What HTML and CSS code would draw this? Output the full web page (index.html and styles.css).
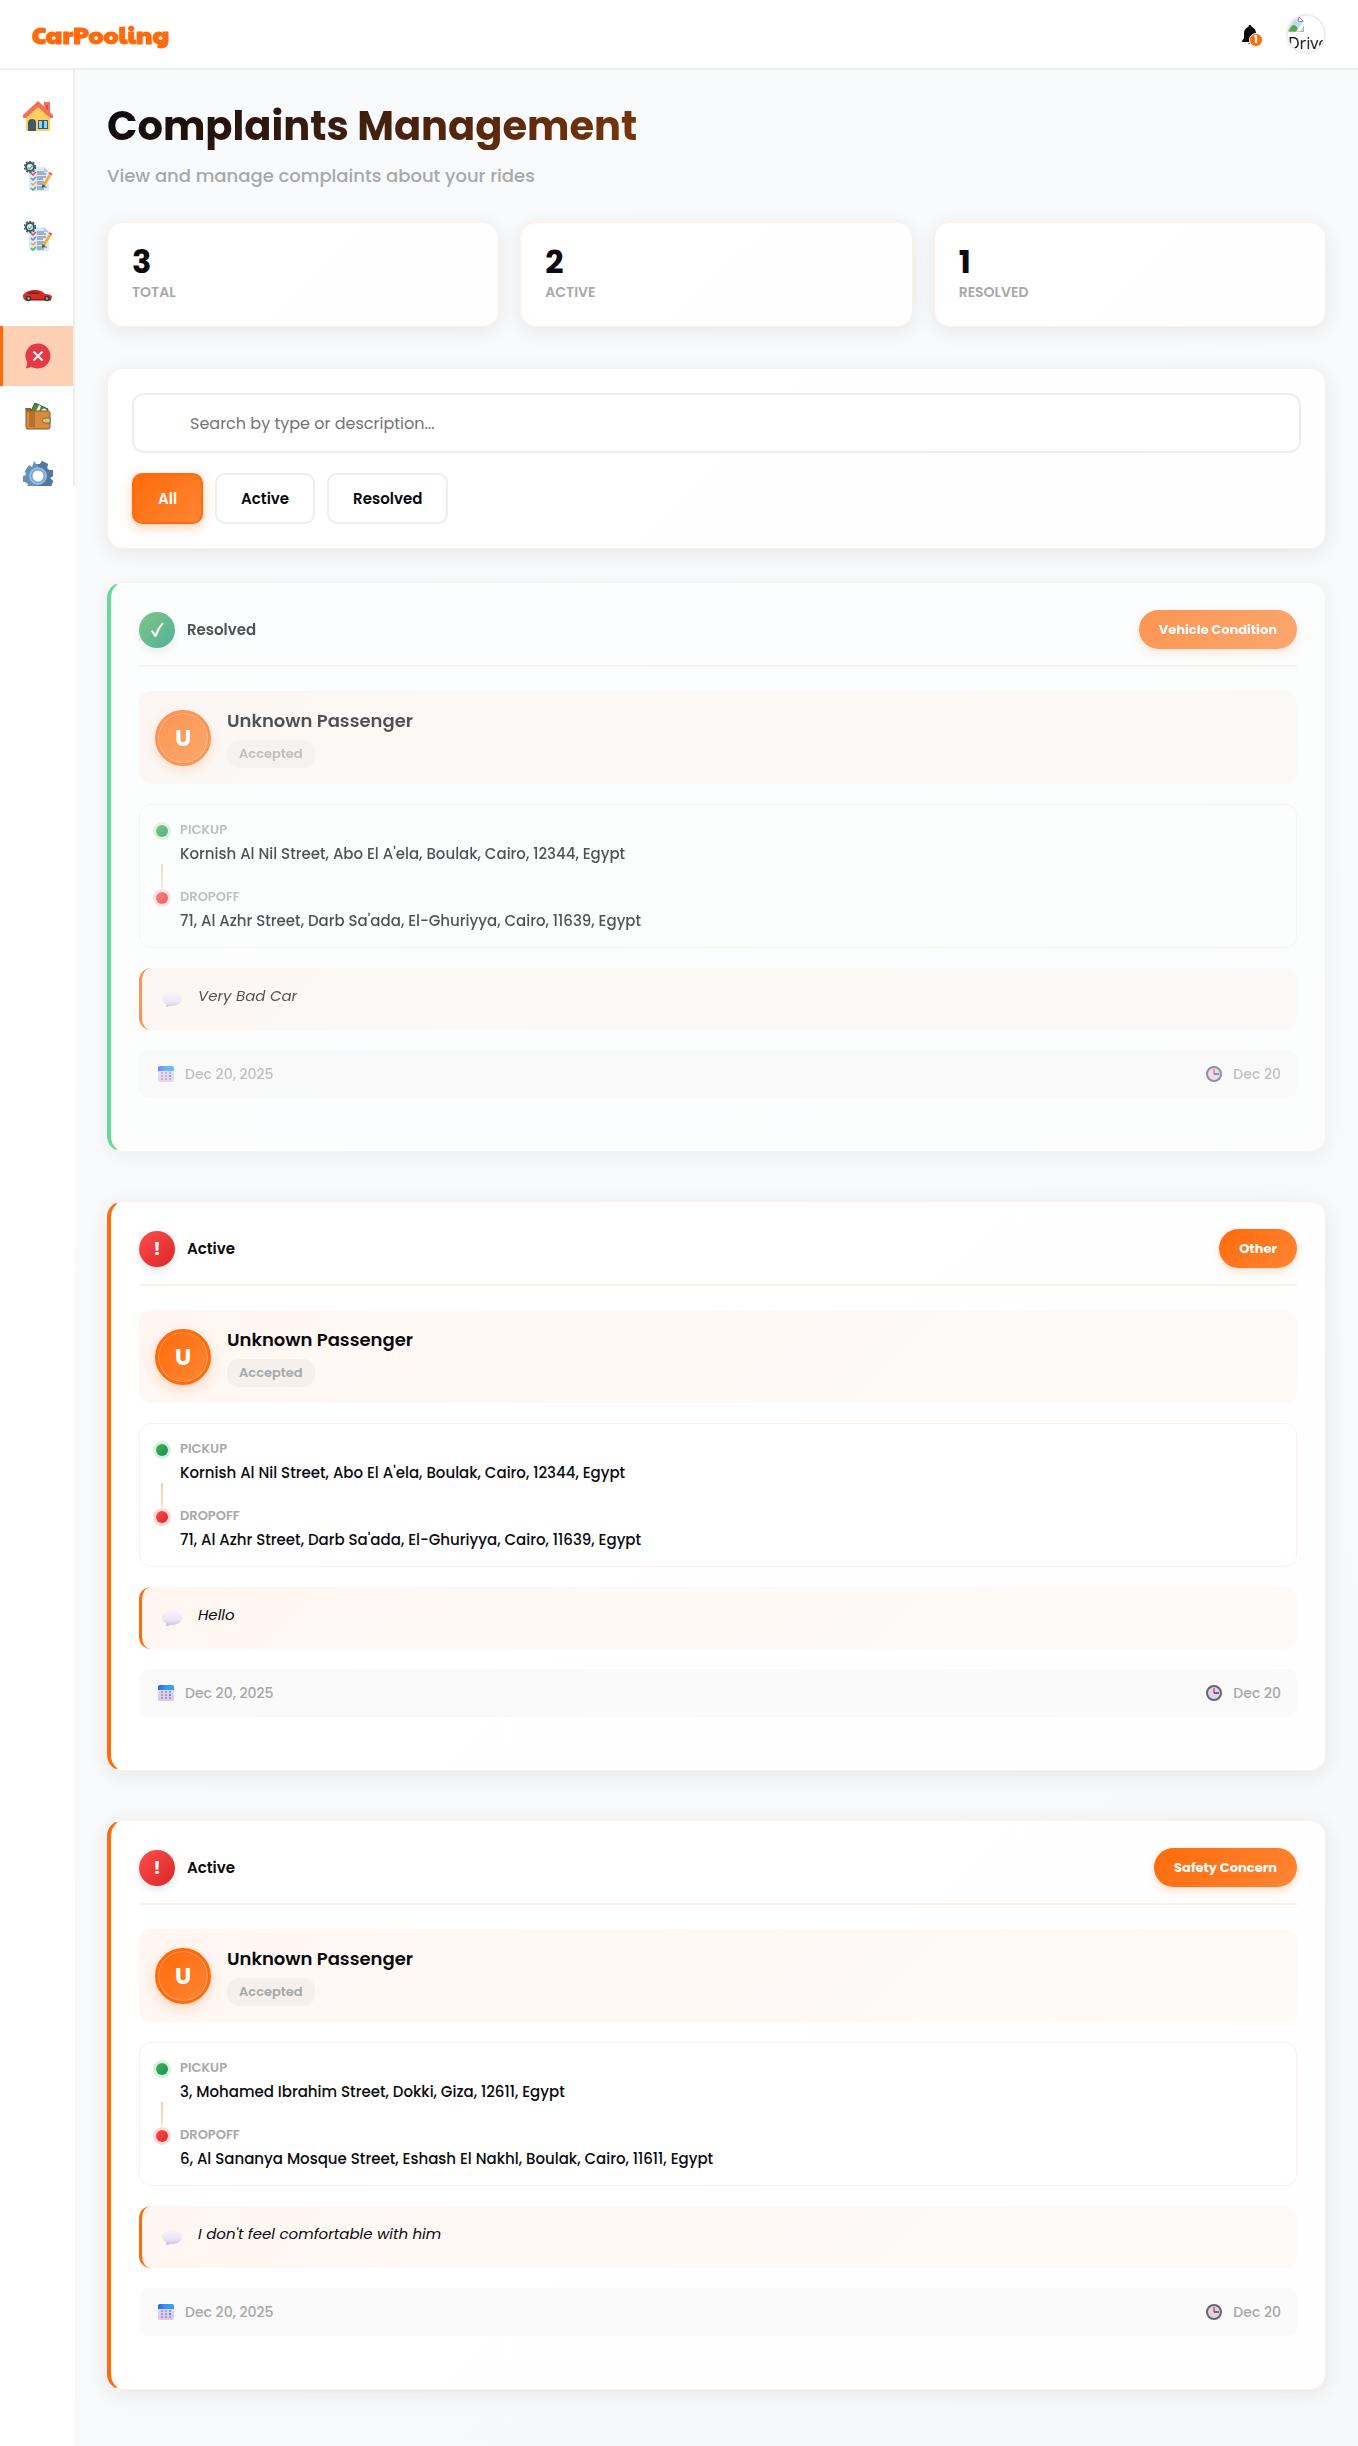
FILE: index.html
```html
<!DOCTYPE html>
<html lang="en">
<head>
<meta charset="utf-8">
<meta name="viewport" content="width=device-width, initial-scale=1">
<title>Complaints Management</title>
<link rel="stylesheet" href="styles.css">
</head>
<body>
<svg class="sprite" aria-hidden="true">
  <defs>
    <linearGradient id="bubbleFill" x1="0" y1="0" x2="0" y2="1"><stop offset="0" stop-color="#f6f2fa"/><stop offset=".6" stop-color="#ece4f2"/><stop offset="1" stop-color="#cbbfe0"/></linearGradient>
    <linearGradient id="calTop" x1="0" y1="0" x2="1" y2="0"><stop offset="0" stop-color="#2b62e8"/><stop offset=".5" stop-color="#2f9bff"/><stop offset="1" stop-color="#35a4ff"/></linearGradient>
    <linearGradient id="calBody" x1="0" y1="0" x2="0" y2="1"><stop offset="0" stop-color="#e3dcee"/><stop offset="1" stop-color="#dcc4ee"/></linearGradient>
  </defs>
  <symbol id="i-home" viewBox="0 0 30 30">
    <path d="M21 1h6v10h-4l-2-2z" fill="#f5705c"/><path d="M23 4h2v6h-2z" fill="#d9503f"/>
    <path d="M3 14 15 3l12 11v16H3z" fill="#ffd05b"/>
    <path d="M15 0 0 14v3h3L15 6l12 11h3v-3z" fill="#f5705c"/>
    <path d="M5 30V22a4 4 0 0 1 8 0v8z" fill="#40596b"/>
    <path d="M15 19h10v9H15z" fill="#40596b"/><path d="M16 20h3v7h-3zM21 20h3v7h-3z" fill="#84dbff"/>
  </symbol>
  <symbol id="i-list" viewBox="0 0 30 30">
    <path d="M6 6h15l5 5v19H6z" fill="#dce9f8"/><path d="M21 6v5h5z" fill="#b3cbe6"/>
    <circle cx="7" cy="6" r="4" fill="#e9f3f4" stroke="#3e5568" stroke-width="2"/>
    <circle cx="7" cy="6" r="5.5" fill="none" stroke="#3e5568" stroke-width="1.4" stroke-dasharray="2 1.5"/>
    <path d="m5 6 1.500 2L9.500 4.500" fill="none" stroke="#4bc07d" stroke-width="1.200"/>
    <path d="M14 11h7M14 13h9M14 16h9M14 18h6M14 21h7M14 23h6M14 26h10M14 28h7" stroke="#64788c" stroke-width="1.200"/>
    <path d="m8 12 2 2 3-3" fill="none" stroke="#f0414f" stroke-width="1.500"/>
    <path d="m8 17 2 2 3-3" fill="none" stroke="#4a8cf0" stroke-width="1.500"/>
    <path d="m8 22 2 2 3-3" fill="none" stroke="#f6a823" stroke-width="1.500"/>
    <path d="m8 27 2 2 3-3" fill="none" stroke="#37b769" stroke-width="1.500"/>
    <path d="m27 14-6 10" stroke="#ffa914" stroke-width="2.500"/><path d="m28.500 14.500-3-2 1-1.500 3 2z" fill="#f0414f"/><path d="m19.500 23-.5 4 3.500-2z" fill="#3e4a57"/>
  </symbol>
  <symbol id="i-car" viewBox="0 0 30 30">
    <path d="M0 14c3-4 8-5 12-5 5 0 7 1 10 4 4 0 7 1 7 3l-1 3H2c-2-1-2-3-2-5z" fill="#dd2a22"/>
    <path d="M4 13c3-3 9-4 14 0z" fill="#7b2b24"/><path d="M2 18h26v1.500H2z" fill="#7d201b"/>
    <circle cx="5.500" cy="17.500" r="2.800" fill="#3b3d35"/><circle cx="24" cy="17.500" r="2.800" fill="#3b3d35"/>
    <circle cx="5.500" cy="17.500" r="1.200" fill="#a5a89b"/><circle cx="24" cy="17.500" r="1.200" fill="#a5a89b"/>
  </symbol>
  <symbol id="i-complaint" viewBox="0 0 30 30">
    <path d="M15 2.500a12.500 12.500 0 1 1-6.500 23.200L3 27.500l1.300-6A12.500 12.500 0 0 1 15 2.500z" fill="#e63946"/>
    <path d="m10.500 10.500 9 9m0-9-9 9" stroke="#eee" stroke-width="2.200"/>
  </symbol>
  <symbol id="i-wallet" viewBox="0 0 30 30">
    <path d="m8 10 4-8 13 6-1 5H8z" fill="#4f8b3d" stroke="#2e5a29"/><path d="m13 10 3-6 2 1-2 6zM18 10c2-4 6-3 6 1z" fill="#e9f3dd"/>
    <path d="M3 7h5v4H3z" fill="#9a5c28"/>
    <path d="M5 10h20a2 2 0 0 1 2 2v14a2 2 0 0 1-2 2H5a2 2 0 0 1-2-2V7c0 2 1 3 2 3z" fill="#d68b3f" stroke="#8d5525"/>
    <path d="M6 11h6v15H6z" fill="#b6702f"/>
    <path d="M27 17h-5a2.500 2.500 0 0 0 0 5h5z" fill="#dbcd9a" stroke="#7a6640"/><circle cx="23" cy="19.500" r="1.300" fill="#e8b923"/>
  </symbol>
  <symbol id="i-gear" viewBox="0 0 30 30">
    <path d="m11 0 2 3h4l2-3 6 3-1 4 2 2h4v6l-3 2 3 3-2 6-4-1-3 3v3h-6l-2-3-3 3-6-4 1-4-3-2H0v-6l3-1-1-4 4-6 3 2z" fill="#668fb9"/>
    <path d="m15 3h2l2-3 6 3-1 4 2 2h4v6l-3 2 3 3-2 6-4-1-3 3v3h-6z" fill="#54779f"/>
    <circle cx="15" cy="15" r="9" fill="#93bce0"/><circle cx="15" cy="15" r="7" fill="#7aa5d0"/><circle cx="15" cy="15" r="5.500" fill="#fff"/>
  </symbol>
  <symbol id="i-bubble" viewBox="0 0 20 16">
    <path d="M10 0c5.500 0 10 3 10 7s-4.500 7-10 7c-2 0-3 0-4 1H4v-3C1.500 11 0 9 0 7c0-4 4.500-7 10-7z" fill="url(#bubbleFill)"/>
  </symbol>
  <symbol id="i-calendar" viewBox="0 0 16 16">
    <rect width="16" height="16" rx="2" fill="url(#calBody)"/><path d="M2 0h12a2 2 0 0 1 2 2v3H0V2a2 2 0 0 1 2-2z" fill="url(#calTop)"/>
    <path d="M3 6h2v2H3zm4 0h2v2H7zm4 0h2v2h-2zM3 9h2v2H3zm4 0h2v2H7zM3 12h2v2H3zm4 0h2v2H7zm4 0h2v2h-2z" fill="#a99fb4"/><path d="M11 9h2v2h-2z" fill="#3392f5"/>
  </symbol>
  <symbol id="i-clock" viewBox="0 0 16 16">
    <circle cx="8" cy="8" r="7" fill="#ddd6e2" stroke="#6b626f" stroke-width="2"/>
    <path d="M8 3v5" stroke="#f0406c" stroke-width="1.500"/><path d="M8 8h5" stroke="#4a4060" stroke-width="1.500"/>
  </symbol>
  <symbol id="i-check" viewBox="0 0 16 16">
    <path d="M1 9c1-1 2-1 2.500 0L5.500 12C7.500 7 10 3 13 .5c.7-.5 1.700 0 1.300.8C11 5.500 9 10 7 14.500c-.6 1.200-2 1.200-2.600.2z" fill="#fff"/>
  </symbol>
</svg>

<header class="topbar">
  <a class="logo" href="#">CarPooling</a>
  <div class="topbar-actions">
    <button class="bell" type="button" aria-label="Notifications">
      <svg viewBox="0 0 16 19"><path d="M8 0c1 0 1.500.7 1.500 1.700C12 2.500 14 5 14 8v5l2 3v1H0v-1l2-3V8c0-3 2-5.500 4.500-6.300C6.500.7 7 0 8 0zM6 18h4c0 1-4 1-4 0z" fill="#0a0a0f"/></svg>
      <span class="bell-count">1</span>
    </button>
    <a class="profile" href="#">
      <svg viewBox="0 0 16 16"><path d="M.5.500h10l5 5v10H.5z" fill="#c6d7f8" stroke="#a5a9b0"/><path d="M10.500.500v5h5z" fill="#fff" stroke="#8b8f96"/><path d="M1 15c1-4 3-6 5-6s3 2 5 6z" fill="#4faf3b"/><path d="M16 5 8 15.500h4L16 10z" fill="#fff"/></svg>
      <span>Driver</span>
    </a>
  </div>
</header>

<div class="layout">
  <nav class="sidebar" aria-label="Main">
    <a href="#" aria-label="Home"><svg><use href="#i-home"/></svg></a>
    <a href="#" aria-label="Requests"><svg><use href="#i-list"/></svg></a>
    <a href="#" aria-label="Bookings"><svg><use href="#i-list"/></svg></a>
    <a href="#" aria-label="Cars"><svg><use href="#i-car"/></svg></a>
    <a href="#" class="current" aria-label="Complaints" aria-current="page"><svg><use href="#i-complaint"/></svg></a>
    <a href="#" aria-label="Wallet"><svg><use href="#i-wallet"/></svg></a>
    <a href="#" aria-label="Settings"><svg><use href="#i-gear"/></svg></a>
  </nav>

  <main class="content">
    <h1>Complaints Management</h1>
    <p class="subtitle">View and manage complaints about your rides</p>

    <section class="stats" aria-label="Summary">
      <div class="panel stat"><strong>3</strong><span>TOTAL</span></div>
      <div class="panel stat"><strong>2</strong><span>ACTIVE</span></div>
      <div class="panel stat"><strong>1</strong><span>RESOLVED</span></div>
    </section>

    <section class="panel filters" aria-label="Filters">
      <input type="search" aria-label="Search complaints" placeholder="Search by type or description...">
      <div class="filter-buttons">
        <button type="button" class="selected">All</button>
        <button type="button">Active</button>
        <button type="button">Resolved</button>
      </div>
    </section>

    <section class="complaints" aria-label="Complaints">
      <article class="complaint resolved">
        <header class="complaint-head">
          <span class="status-icon"><svg><use href="#i-check"/></svg></span>
          <span class="status">Resolved</span>
          <span class="type">Vehicle Condition</span>
        </header>
        <div class="passenger">
          <span class="initial">U</span>
          <div>
            <h2>Unknown Passenger</h2>
            <span class="tag">Accepted</span>
          </div>
        </div>
        <div class="route">
          <div class="stop">
            <div class="track"><i class="dot pickup"></i><i class="line"></i></div>
            <div><h3>PICKUP</h3><p>Kornish Al Nil Street, Abo El A'ela, Boulak, Cairo, 12344, Egypt</p></div>
          </div>
          <div class="stop">
            <div class="track"><i class="dot dropoff"></i></div>
            <div><h3>DROPOFF</h3><p>71, Al Azhr Street, Darb Sa'ada, El-Ghuriyya, Cairo, 11639, Egypt</p></div>
          </div>
        </div>
        <blockquote><svg><use href="#i-bubble"/></svg><p>Very Bad Car</p></blockquote>
        <footer class="meta">
          <span><svg><use href="#i-calendar"/></svg>Dec 20, 2025</span>
          <span><svg><use href="#i-clock"/></svg>Dec 20</span>
        </footer>
      </article>

      <article class="complaint">
        <header class="complaint-head">
          <span class="status-icon">!</span>
          <span class="status">Active</span>
          <span class="type">Other</span>
        </header>
        <div class="passenger">
          <span class="initial">U</span>
          <div>
            <h2>Unknown Passenger</h2>
            <span class="tag">Accepted</span>
          </div>
        </div>
        <div class="route">
          <div class="stop">
            <div class="track"><i class="dot pickup"></i><i class="line"></i></div>
            <div><h3>PICKUP</h3><p>Kornish Al Nil Street, Abo El A'ela, Boulak, Cairo, 12344, Egypt</p></div>
          </div>
          <div class="stop">
            <div class="track"><i class="dot dropoff"></i></div>
            <div><h3>DROPOFF</h3><p>71, Al Azhr Street, Darb Sa'ada, El-Ghuriyya, Cairo, 11639, Egypt</p></div>
          </div>
        </div>
        <blockquote><svg><use href="#i-bubble"/></svg><p>Hello</p></blockquote>
        <footer class="meta">
          <span><svg><use href="#i-calendar"/></svg>Dec 20, 2025</span>
          <span><svg><use href="#i-clock"/></svg>Dec 20</span>
        </footer>
      </article>

      <article class="complaint">
        <header class="complaint-head">
          <span class="status-icon">!</span>
          <span class="status">Active</span>
          <span class="type">Safety Concern</span>
        </header>
        <div class="passenger">
          <span class="initial">U</span>
          <div>
            <h2>Unknown Passenger</h2>
            <span class="tag">Accepted</span>
          </div>
        </div>
        <div class="route">
          <div class="stop">
            <div class="track"><i class="dot pickup"></i><i class="line"></i></div>
            <div><h3>PICKUP</h3><p>3, Mohamed Ibrahim Street, Dokki, Giza, 12611, Egypt</p></div>
          </div>
          <div class="stop">
            <div class="track"><i class="dot dropoff"></i></div>
            <div><h3>DROPOFF</h3><p>6, Al Sananya Mosque Street, Eshash El Nakhl, Boulak, Cairo, 11611, Egypt</p></div>
          </div>
        </div>
        <blockquote><svg><use href="#i-bubble"/></svg><p>I don't feel comfortable with him</p></blockquote>
        <footer class="meta">
          <span><svg><use href="#i-calendar"/></svg>Dec 20, 2025</span>
          <span><svg><use href="#i-clock"/></svg>Dec 20</span>
        </footer>
      </article>
    </section>
  </main>
</div>
</body>
</html>
```
FILE: styles.css
```css
:root {
  --orange: #ff6b0a;
  --orange-light: #ff8534;
  --peach: #fff0e6;
  --ink: #0a0a0f;
  --grey: #a8a8a8;
  --line: #eeeeee;
}

* { box-sizing: border-box; }

body {
  margin: 0;
  background: #fff;
  color: var(--ink);
  font-family: Poppins, Inter, sans-serif;
  font-size: 15px;
  line-height: 24px;
}

h1, h2, h3, p, blockquote { margin: 0; }
a { color: inherit; text-decoration: none; }
button, input { font: inherit; color: inherit; }
button { cursor: pointer; }
svg { display: block; flex: none; }
.sprite { position: absolute; width: 0; height: 0; }

/* Top bar */
.topbar {
  display: flex;
  align-items: center;
  justify-content: space-between;
  height: 70px;
  padding: 0 32px;
  border-bottom: 2px solid var(--line);
}
.logo {
  color: var(--orange);
  font-family: "Paytone One", Poppins, Inter, sans-serif;
  font-size: 24px;
  font-weight: 900;
  line-height: 32px;
}
.topbar-actions { display: flex; align-items: center; gap: 28px; }
.bell { position: relative; padding: 0; border: 0; background: none; }
.bell svg { width: 16px; height: 19px; }
.bell-count {
  position: absolute;
  right: -5px;
  bottom: -3px;
  width: 14px;
  height: 14px;
  border: 1px solid #fff;
  border-radius: 50%;
  background: var(--orange);
  color: #fff;
  font-size: 10px;
  font-weight: 700;
  line-height: 12px;
  text-align: center;
}
.profile {
  width: 40px;
  height: 40px;
  overflow: hidden;
  border: 2px solid var(--line);
  border-radius: 50%;
  font-family: "Open Sans", sans-serif;
  font-size: 16px;
  line-height: 22px;
}
.profile svg { width: 16px; height: 16px; }

/* Sidebar */
.layout { display: flex; align-items: flex-start; }
.sidebar {
  flex: none;
  width: 75px;
  height: 416px;
  padding-top: 16px;
  overflow: hidden;
  border-right: 2px solid var(--line);
}
.sidebar a {
  display: flex;
  align-items: center;
  justify-content: center;
  height: 60px;
  border-left: 3px solid transparent;
}
.sidebar .current { border-left-color: var(--orange); background: #ffd0b3; }
.sidebar svg { width: 30px; height: 30px; }

/* Page */
.content {
  flex: 1;
  min-width: 0;
  padding: 32px 32px 56px;
  background: linear-gradient(135deg, #f8fafc, #f7f8fa);
}
h1 {
  background: linear-gradient(135deg, var(--ink), var(--orange));
  background-clip: text;
  color: transparent;
  font-size: 40px;
  font-weight: 700;
  line-height: 48px;
}
.subtitle { margin: 12px 0 32px; color: var(--grey); font-size: 18px; font-weight: 500; line-height: 28px; }

.panel {
  border: 1px solid var(--peach);
  border-radius: 16px;
  background: linear-gradient(135deg, #fff, #fefefe);
  box-shadow: 0 4px 20px rgba(0, 0, 0, .08);
}
.stats { display: grid; grid-template-columns: repeat(3, 1fr); gap: 21px; }
.stat { display: flex; flex-direction: column; height: 105px; padding: 20px 24px; }
.stat strong { font-size: 32px; font-weight: 700; line-height: 38px; }
.stat span { color: var(--grey); font-size: 14px; font-weight: 600; line-height: 22px; }

.filters { margin-top: 41px; padding: 24px; }
.filters input {
  width: 100%;
  height: 60px;
  padding: 0 24px 0 56px;
  border: 2px solid var(--line);
  border-radius: 12px;
  background: #fff;
  font-size: 16px;
  font-weight: 400;
}
.filters input::placeholder { color: #757575; opacity: 1; }
.filter-buttons { display: flex; flex-wrap: wrap; gap: 12px; margin-top: 20px; }
.filter-buttons button {
  height: 51px;
  padding: 0 24px;
  border: 2px solid var(--line);
  border-radius: 10px;
  background: #fff;
  font-size: 15px;
  font-weight: 600;
}
.filter-buttons .selected {
  border-color: var(--orange);
  background: linear-gradient(135deg, var(--orange), var(--orange-light));
  box-shadow: 0 4px 12px rgba(255, 107, 10, .3);
  color: #fff;
}

/* Complaint cards */
.complaints { display: grid; gap: 49px; margin-top: 33px; }
.complaint {
  display: grid;
  gap: 20px;
  padding: 27px 28px 53px;
  border: 1px solid var(--peach);
  border-left: 4px solid var(--orange);
  border-radius: 16px;
  background: linear-gradient(135deg, #fff, #fefefe);
  box-shadow: 0 4px 20px rgba(0, 0, 0, .08);
}
.complaint.resolved { border-left-color: #2ecc71; opacity: .7; }

.complaint-head {
  display: flex;
  align-items: center;
  gap: 12px;
  margin-bottom: 4px;
  padding-bottom: 16px;
  border-bottom: 2px solid var(--peach);
}
.status-icon {
  display: grid;
  place-items: center;
  width: 36px;
  height: 36px;
  border-radius: 50%;
  background: linear-gradient(135deg, #ff4d4d, #d92626);
  box-shadow: 0 4px 8px rgba(0, 0, 0, .1);
  color: #fff;
  font-size: 18px;
  font-weight: 700;
}
.status-icon svg { width: 15px; height: 16px; }
.resolved .status-icon { background: linear-gradient(135deg, #4caf50, #0d9373); }
.status { font-weight: 600; }
.type {
  margin-left: auto;
  padding: 0 20px;
  border-radius: 20px;
  background: linear-gradient(135deg, var(--orange), var(--orange-light));
  box-shadow: 0 4px 8px rgba(255, 107, 10, .2);
  color: #fff;
  font-size: 13px;
  font-weight: 700;
  line-height: 39px;
}

.passenger {
  display: flex;
  align-items: center;
  gap: 16px;
  height: 93px;
  padding: 0 16px;
  border-radius: 12px;
  background: linear-gradient(135deg, #fff6f1, #fff9f5 30%, #fdfaf7);
}
.initial {
  width: 56px;
  height: 56px;
  border: 3px solid var(--orange);
  border-radius: 50%;
  background: linear-gradient(135deg, var(--orange), var(--orange-light));
  box-shadow: 0 4px 12px rgba(255, 107, 10, .25), inset 0 0 0 1px rgba(255, 255, 255, .3);
  color: #fff;
  font-size: 23px;
  font-weight: 700;
  line-height: 50px;
  text-align: center;
}
h2 { font-size: 18px; font-weight: 600; line-height: 26px; }
.tag {
  display: block;
  width: max-content;
  margin-top: 6px;
  padding: 0 12px;
  border-radius: 12px;
  background: #f5f0ec;
  color: var(--grey);
  font-size: 13px;
  font-weight: 600;
  line-height: 28px;
}

.route { padding: 16px 16px 14px; border: 1px solid var(--peach); border-radius: 12px; background: #fff; }
.stop { display: flex; gap: 12px; }
.stop p { font-weight: 500; }
.stop:first-child > :last-child { padding-bottom: 22px; }
.track { display: flex; flex-direction: column; align-items: center; width: 12px; padding-top: 4px; }
.dot { width: 12px; height: 12px; border-radius: 50%; }
.pickup { background: linear-gradient(135deg, #4caf50, #0d9356); box-shadow: 0 0 0 3px #d9f0dc; }
.dropoff { background: linear-gradient(135deg, #ff4d4d, #d92626); box-shadow: 0 0 0 3px #ffd9d9; }
.line { width: 2px; height: 24px; margin-top: auto; background: linear-gradient(#ffc8a3, #ffe3d2); }
h3 { margin-bottom: 3px; color: var(--grey); font-size: 13px; font-weight: 600; line-height: 18px; }

blockquote {
  display: flex;
  gap: 16px;
  height: 62px;
  padding: 16px 20px;
  border-left: 3px solid var(--orange);
  border-radius: 12px;
  background: linear-gradient(135deg, #fff6f1, #fff9f5 30%, #fdfaf7);
  font-style: italic;
}
blockquote svg { width: 20px; height: 16px; margin-top: 8px; }

.meta {
  display: flex;
  align-items: center;
  justify-content: space-between;
  height: 48px;
  padding: 0 16px 0 19px;
  border-radius: 10px;
  background: #fafafa;
  color: var(--grey);
  font-size: 14px;
  font-weight: 500;
}
.meta span { display: flex; align-items: center; gap: 11px; }
.meta svg { width: 16px; height: 16px; }
```
